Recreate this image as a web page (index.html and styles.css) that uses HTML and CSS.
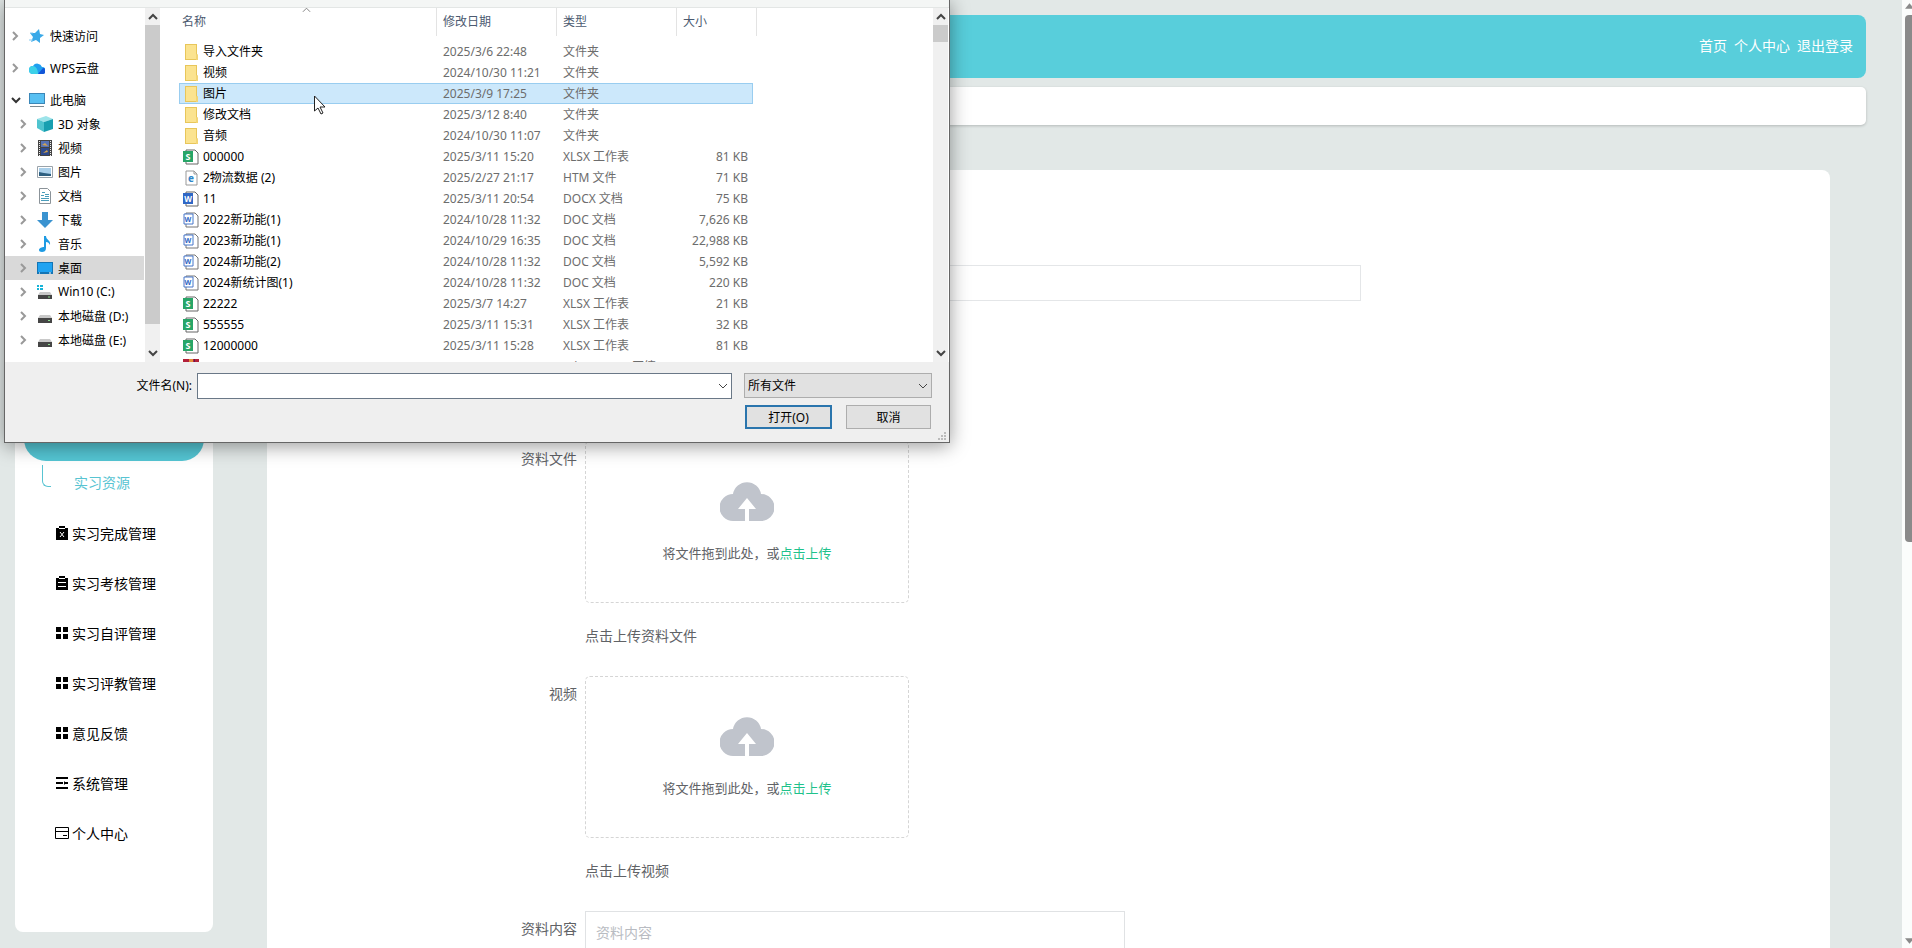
FILE: index.html
```html
<!DOCTYPE html>
<html lang="zh-CN">
<head>
  <meta charset="UTF-8">
  <meta name="viewport" content="width=device-width, initial-scale=1.0">
  <title>实习资源</title>
  <link rel="stylesheet" href="styles.css">
</head>
<body>

  <!-- 图标 -->
  <svg class="sprite" width="0" height="0">
    <symbol id="right" viewBox="0 0 8 10"><path d="M2 1l4 4-4 4" fill="none" stroke="currentColor"/></symbol>
    <symbol id="down" viewBox="0 0 10 8"><path d="M1 2l4 4 4-4" fill="none" stroke="currentColor"/></symbol>
    <symbol id="up" viewBox="0 0 10 8"><path d="M1 6l4-4 4 4" fill="none" stroke="currentColor"/></symbol>
    <symbol id="folder" viewBox="0 0 16 16"><path d="M2 0h12v10l1 1v5H2z" fill="#e8c65a"/><path d="M3 1h10v14H3z" fill="#fbe38f"/><path d="M13 10l2 1v5h-2z" fill="#f3d575"/></symbol>
    <symbol id="xlsx" viewBox="0 0 16 16"><path d="M3 1h9l3 3v11H3z" fill="#fff" stroke="#666"/><path d="M0 2h10v11H0z" fill="#27a567"/><text x="5" y="11" text-anchor="middle" font-size="9" font-weight="bold" fill="#fff">S</text></symbol>
    <symbol id="docx" viewBox="0 0 16 16"><path d="M3 1h9l3 3v11H3z" fill="#fff" stroke="#666"/><path d="M0 2h10v11H0z" fill="#2f67c5"/><text x="5" y="11" text-anchor="middle" font-size="8" font-weight="bold" fill="#fff">W</text></symbol>
    <symbol id="doc" viewBox="0 0 16 16"><path d="M3 1h9l3 3v11H3z" fill="#fff" stroke="#777"/><path d="M1 2h9v10H1z" fill="#fff" stroke="#4677ca"/><text x="5" y="10" text-anchor="middle" font-size="7" font-weight="bold" fill="#2f67c5">W</text></symbol>
    <symbol id="htm" viewBox="0 0 16 16"><path d="M3 1h8l3 3v11H3z" fill="#fff" stroke="#999"/><path d="M11 1v3h3" fill="none" stroke="#999"/><text x="8" y="12" text-anchor="middle" font-size="10" font-weight="bold" fill="#2d86c9">e</text></symbol>
    <symbol id="zip" viewBox="0 0 16 16"><path d="M0 0h16v16H0z" fill="#b3203a"/><path d="M6 0h4v16H6z" fill="#e5913a"/><path d="M11 0h1v16h-1z" fill="#5f1b55"/></symbol>
    <symbol id="star" viewBox="0 0 16 16"><path d="M10 1l1 5 4 1-4 3v5l-4-3-5 2 2-5-3-4h5z" fill="#3aa9e8"/><path d="M0 12h4M1 5h3" stroke="#8acbf0"/></symbol>
    <symbol id="wps" viewBox="0 0 16 16"><path d="M4 14a4 4 0 0 1 0-8 5 5 0 0 1 9 1 3 3 0 0 1 0 7z" fill="#1f9ff0"/><path d="M4 14a4 4 0 0 1 0-8c3 0 5 4 5 8z" fill="#3cd1e8"/><path d="M9 14l5-6a3 3 0 0 1-1 6z" fill="#1356d8"/></symbol>
    <symbol id="pc" viewBox="0 0 16 16"><path d="M0 1h16v11H0z" fill="#3b87b8"/><path d="M1 2h14v9H1z" fill="#58c0f2"/><path d="M1 14.500h14" stroke="#7d8a92"/></symbol>
    <symbol id="cube" viewBox="0 0 16 16"><path d="M0 3l9-3 7 3-9 3z" fill="#9de4ea"/><path d="M0 3l7 3v10l-7-4z" fill="#4fc4cf"/><path d="M7 6l9-3v10l-9 3z" fill="#189fb0"/></symbol>
    <symbol id="film" viewBox="0 0 16 16"><path d="M1 0h14v16H1z" fill="#444"/><path d="M4 1h8v6H4z" fill="#5772b5"/><path d="M4 8h8v7H4z" fill="#2e4a8c"/><path d="M5 5l3-2 3 3zM6 13l4-3 1 2z" fill="#d4a44e"/><path d="M2.500 1v15M13.500 1v15" stroke="#eee" stroke-dasharray="1 1"/></symbol>
    <symbol id="photo" viewBox="0 0 16 16"><path d="M0.500 2.500h15v11H0.500z" fill="#fff" stroke="#9aa3aa"/><path d="M2 4h12v8H2z" fill="#a9cfea"/><path d="M2 8l5 1 7 1v2H2z" fill="#2e5f80"/></symbol>
    <symbol id="paper" viewBox="0 0 16 16"><path d="M2.500 0.500h8l3 3v12h-11z" fill="#fff" stroke="#8b9399"/><path d="M4 7.500h3M4 10.500h8M4 12.500h8M8 6.500h4M8 8.500h4M5 4.500h3" stroke="#4b9dbb"/></symbol>
    <symbol id="download" viewBox="0 0 16 16"><path d="M5 0h6v8h5l-8 8-8-8h5z" fill="#3a93d0"/></symbol>
    <symbol id="music" viewBox="0 0 16 16"><path d="M7 0h2c0 4 5 4 4 9-1-2-2-3-4-3v6c0 3-2 4-4 4s-3-1-3-2c0-2 3-3 5-3z" fill="#1e9be3"/></symbol>
    <symbol id="desk" viewBox="0 0 16 16"><path d="M0 2h16v12H0z" fill="#1475b5"/><path d="M1 3h14v9H1z" fill="#20a3f2"/><path d="M2 13h1M12 13h2" stroke="#fff"/></symbol>
    <symbol id="disk" viewBox="0 0 16 16"><path d="M3 7h10l2 3H1z" fill="#c9c9c9"/><path d="M1 10h14v5H1z" fill="#454545"/><path d="M11 12.500h2" stroke="#8fe08f"/></symbol>
    <symbol id="windisk" viewBox="0 0 16 16"><path d="M3 8h10l2 3H1z" fill="#c9c9c9"/><path d="M1 11h14v4H1z" fill="#454545"/><path d="M11 13h2" stroke="#8fe08f"/><path d="M0 1h2v2H0zM3 1h3v2H3zM0 4h2v2H0zM3 4h3v2H3z" fill="#17b4d8"/></symbol>
    <symbol id="clip-x" viewBox="0 0 14 14"><path d="M1 2h3V0h6v2h3v12H1z"/><path d="M4 2.500h6M5 6l4 5M9 6l-4 5" stroke="#fff" fill="none"/></symbol>
    <symbol id="clip" viewBox="0 0 14 14"><path d="M1 2h3V0h6v2h3v12H1z"/><path d="M4 2.500h6M3 6.500h8M3 10.500h8" stroke="#fff" fill="none"/></symbol>
    <symbol id="menu" viewBox="0 0 14 14"><path d="M1 1h5v5H1zM8 1h5v5H8zM1 8h5v5H1zM8 8h5v5H8z"/></symbol>
    <symbol id="operation" viewBox="0 0 14 14"><path d="M1 2h12M1 7h7M10 7h3M1 12h12" stroke="currentColor" stroke-width="2"/><path d="M9 5l2 2-2 2z"/></symbol>
    <symbol id="card" viewBox="0 0 14 14"><path d="M0.500 1.500h13v11h-13zM0.500 5.500h13M8 9.500h4" fill="none" stroke="currentColor"/></symbol>
    <symbol id="cloud" viewBox="0 0 54 40"><path d="M13 40a13.500 13.500 0 0 1 0-27 14.200 14.200 0 0 1 28 0 13.500 13.500 0 0 1 0 27H29V28h7L27 17l-9 11h7v12z" fill="#c0c4cc"/></symbol>
  </svg>

  <div class="page">
    <aside class="sidebar">
      <ul class="menu">
        <li><a class="menu-active" href="#"><svg class="icon"><use href="#menu"/></svg>实习资源管理</a></li>
        <li class="submenu"><span class="branch"></span><a href="#">实习资源</a></li>
        <li><a href="#"><svg class="icon"><use href="#clip-x"/></svg>实习完成管理</a></li>
        <li><a href="#"><svg class="icon"><use href="#clip"/></svg>实习考核管理</a></li>
        <li><a href="#"><svg class="icon"><use href="#menu"/></svg>实习自评管理</a></li>
        <li><a href="#"><svg class="icon"><use href="#menu"/></svg>实习评教管理</a></li>
        <li><a href="#"><svg class="icon"><use href="#menu"/></svg>意见反馈</a></li>
        <li><a href="#"><svg class="icon"><use href="#operation"/></svg>系统管理</a></li>
        <li><a href="#"><svg class="icon"><use href="#card"/></svg>个人中心</a></li>
      </ul>
    </aside>

    <main class="main">
      <header class="header">
        <a href="#">首页</a>
        <a href="#">个人中心</a>
        <a href="#">退出登录</a>
      </header>
      <div class="tabs"></div>
      <form class="form">
        <div class="form-item form-title">
          <div class="field"><input class="text-input" type="text" aria-label="资料名称"></div>
        </div>
        <div class="form-item">
          <label for="file">资料文件</label>
          <div class="field">
            <button type="button" class="upload" id="file">
              <svg class="cloud"><use href="#cloud"/></svg>
              <span>将文件拖到此处，或<em>点击上传</em></span>
            </button>
            <p class="tip">点击上传资料文件</p>
          </div>
        </div>
        <div class="form-item">
          <label for="video">视频</label>
          <div class="field">
            <button type="button" class="upload" id="video">
              <svg class="cloud"><use href="#cloud"/></svg>
              <span>将文件拖到此处，或<em>点击上传</em></span>
            </button>
            <p class="tip">点击上传视频</p>
          </div>
        </div>
        <div class="form-item">
          <label for="content">资料内容</label>
          <div class="field"><textarea class="textarea" id="content" placeholder="资料内容"></textarea></div>
        </div>
      </form>
    </main>

    <div class="page-scroll">
      <svg class="page-arrow" viewBox="0 0 10 6"><path d="M0 6l5-6 5 6z"/></svg>
      <div class="page-thumb"></div>
      <svg class="page-arrow page-arrow-down" viewBox="0 0 10 6"><path d="M0 0l5 6 5-6z"/></svg>
    </div>
  </div>

  <!-- 文件选择窗口 -->
  <div class="dialog" role="dialog" aria-label="打开">
    <div class="dialog-top"></div>
    <div class="dialog-body">
      <ul class="tree">
        <li class="root"><svg class="arrow"><use href="#right"/></svg><svg class="file-icon"><use href="#star"/></svg>快速访问</li>
        <li class="root"><svg class="arrow"><use href="#right"/></svg><svg class="file-icon"><use href="#wps"/></svg>WPS云盘</li>
        <li class="root open"><svg class="arrow"><use href="#down"/></svg><svg class="file-icon"><use href="#pc"/></svg>此电脑</li>
        <li><svg class="arrow"><use href="#right"/></svg><svg class="file-icon"><use href="#cube"/></svg>3D 对象</li>
        <li><svg class="arrow"><use href="#right"/></svg><svg class="file-icon"><use href="#film"/></svg>视频</li>
        <li><svg class="arrow"><use href="#right"/></svg><svg class="file-icon"><use href="#photo"/></svg>图片</li>
        <li><svg class="arrow"><use href="#right"/></svg><svg class="file-icon"><use href="#paper"/></svg>文档</li>
        <li><svg class="arrow"><use href="#right"/></svg><svg class="file-icon"><use href="#download"/></svg>下载</li>
        <li><svg class="arrow"><use href="#right"/></svg><svg class="file-icon"><use href="#music"/></svg>音乐</li>
        <li class="current"><svg class="arrow"><use href="#right"/></svg><svg class="file-icon"><use href="#desk"/></svg>桌面</li>
        <li><svg class="arrow"><use href="#right"/></svg><svg class="file-icon"><use href="#windisk"/></svg>Win10 (C:)</li>
        <li><svg class="arrow"><use href="#right"/></svg><svg class="file-icon"><use href="#disk"/></svg>本地磁盘 (D:)</li>
        <li><svg class="arrow"><use href="#right"/></svg><svg class="file-icon"><use href="#disk"/></svg>本地磁盘 (E:)</li>
      </ul>
      <div class="scroll">
        <svg><use href="#up"/></svg>
        <div class="thumb thumb-tree"></div>
        <svg class="scroll-down"><use href="#down"/></svg>
      </div>

      <div class="list">
        <svg class="sort"><use href="#up"/></svg>
        <table class="files">
          <colgroup><col class="col-name"><col class="col-date"><col class="col-type"><col class="col-size"><col class="col-end"></colgroup>
          <thead>
            <tr><th>名称</th><th>修改日期</th><th>类型</th><th>大小</th><th></th></tr>
          </thead>
          <tbody>
            <tr><td><svg class="file-icon"><use href="#folder"/></svg>导入文件夹</td><td>2025/3/6 22:48</td><td>文件夹</td><td></td></tr>
            <tr><td><svg class="file-icon"><use href="#folder"/></svg>视频</td><td>2024/10/30 11:21</td><td>文件夹</td><td></td></tr>
            <tr class="selected"><td><svg class="file-icon"><use href="#folder"/></svg>图片</td><td>2025/3/9 17:25</td><td>文件夹</td><td></td></tr>
            <tr><td><svg class="file-icon"><use href="#folder"/></svg>修改文档</td><td>2025/3/12 8:40</td><td>文件夹</td><td></td></tr>
            <tr><td><svg class="file-icon"><use href="#folder"/></svg>音频</td><td>2024/10/30 11:07</td><td>文件夹</td><td></td></tr>
            <tr><td><svg class="file-icon"><use href="#xlsx"/></svg>000000</td><td>2025/3/11 15:20</td><td>XLSX 工作表</td><td>81 KB</td></tr>
            <tr><td><svg class="file-icon"><use href="#htm"/></svg>2物流数据 (2)</td><td>2025/2/27 21:17</td><td>HTM 文件</td><td>71 KB</td></tr>
            <tr><td><svg class="file-icon"><use href="#docx"/></svg>11</td><td>2025/3/11 20:54</td><td>DOCX 文档</td><td>75 KB</td></tr>
            <tr><td><svg class="file-icon"><use href="#doc"/></svg>2022新功能(1)</td><td>2024/10/28 11:32</td><td>DOC 文档</td><td>7,626 KB</td></tr>
            <tr><td><svg class="file-icon"><use href="#doc"/></svg>2023新功能(1)</td><td>2024/10/29 16:35</td><td>DOC 文档</td><td>22,988 KB</td></tr>
            <tr><td><svg class="file-icon"><use href="#doc"/></svg>2024新功能(2)</td><td>2024/10/28 11:32</td><td>DOC 文档</td><td>5,592 KB</td></tr>
            <tr><td><svg class="file-icon"><use href="#doc"/></svg>2024新统计图(1)</td><td>2024/10/28 11:32</td><td>DOC 文档</td><td>220 KB</td></tr>
            <tr><td><svg class="file-icon"><use href="#xlsx"/></svg>22222</td><td>2025/3/7 14:27</td><td>XLSX 工作表</td><td>21 KB</td></tr>
            <tr><td><svg class="file-icon"><use href="#xlsx"/></svg>555555</td><td>2025/3/11 15:31</td><td>XLSX 工作表</td><td>32 KB</td></tr>
            <tr><td><svg class="file-icon"><use href="#xlsx"/></svg>12000000</td><td>2025/3/11 15:28</td><td>XLSX 工作表</td><td>81 KB</td></tr>
            <tr><td><svg class="file-icon"><use href="#zip"/></svg></td><td></td><td>WinRAR ZIP 压缩</td><td></td></tr>
          </tbody>
        </table>
      </div>
      <div class="scroll scroll-list">
        <svg><use href="#up"/></svg>
        <div class="thumb thumb-list"></div>
        <svg class="scroll-down"><use href="#down"/></svg>
      </div>
    </div>

    <div class="dialog-foot">
      <label for="filename">文件名(N):</label>
      <div class="combo">
        <input type="text" id="filename">
        <svg class="combo-arrow"><use href="#down"/></svg>
      </div>
      <div class="combo">
        <select aria-label="文件类型"><option>所有文件</option></select>
        <svg class="combo-arrow"><use href="#down"/></svg>
      </div>
      <div class="buttons">
        <button type="button" class="btn btn-default">打开(O)</button>
        <button type="button" class="btn">取消</button>
      </div>
    </div>
    <svg class="grip" viewBox="0 0 8 8"><path d="M6 0h2v2H6zM3 3h2v2H3zM6 3h2v2H6zM0 6h2v2H0zM3 6h2v2H3zM6 6h2v2H6z" fill="#bbb"/></svg>
  </div>

  <svg class="cursor" viewBox="0 0 12 20"><path d="M0.500 1v15l3.500-3 3 6 2-1-3-6h5z" fill="#fff" stroke="#222"/></svg>

</body>
</html>
```
FILE: styles.css
```css
* {
  box-sizing: border-box;
}

html, body {
  margin: 0;
  height: 100%;
  overflow: hidden;
  font-family: "Noto Sans", "Noto Sans CJK SC", sans-serif;
  background: #e2e8e7;
}

ul, p {
  margin: 0;
  padding: 0;
  list-style: none;
}

a {
  color: inherit;
  text-decoration: none;
}

input, select, textarea, button {
  font: inherit;
}

.sprite {
  display: none;
}

.page {
  display: flex;
  height: 100%;
  font-size: 14px;
  font-family: "Noto Sans CJK SC", sans-serif;
}

/* 左侧菜单 */
.sidebar {
  width: 198px;
  margin: 15px 18px 16px 15px;
  padding-top: 398px;
  background: #fff;
  border-radius: 8px;
}

.menu a {
  display: flex;
  align-items: center;
  gap: 3px;
  height: 50px;
  padding-left: 40px;
  color: #000;
}

.menu .menu-active {
  height: 48px;
  margin: 0 9px;
  padding: 0 0 4px 31px;
  color: #fff;
  background: #54c5d3;
  border-radius: 22px;
}

.icon {
  width: 14px;
  height: 14px;
  fill: currentColor;
}

.submenu {
  display: flex;
  height: 47px;
  padding: 4px 0 4px 27px;
}

.branch {
  width: 9px;
  height: 22px;
  border: solid #58c4d2;
  border-width: 0 0 1px 1px;
  border-bottom-left-radius: 6px;
}

.menu .submenu a {
  height: 34px;
  padding-left: 23px;
  color: #58c4d2;
}

/* 主体 */
.main {
  flex: 1;
  margin-right: 36px;
}

.header {
  display: flex;
  align-items: center;
  justify-content: flex-end;
  gap: 7px;
  height: 63px;
  margin-top: 15px;
  padding: 0 13px 3px 0;
  color: #fff;
  background: #58cedb;
  border-radius: 8px;
}

.tabs {
  height: 38px;
  margin-top: 9px;
  background: #fff;
  border-radius: 5px;
  box-shadow: 0 1px 3px rgba(0, 0, 0, 0.2);
}

.form {
  margin: 45px 36px 0;
  padding: 95px 30px 30px 0;
  background: #fff;
  border-radius: 8px;
  color: #606266;
}

.form-item {
  display: flex;
  margin-bottom: 26px;
}

.form-item label {
  width: 310px;
  line-height: 34px;
  text-align: right;
}

.field {
  flex: 1;
  margin-left: 8px;
}

.form-title {
  padding-left: 310px;
  margin-bottom: 140px;
}

.text-input {
  display: block;
  width: 100%;
  max-width: 776px;
  height: 36px;
  border: 1px solid #e4e6e8;
}

.upload {
  display: flex;
  flex-direction: column;
  align-items: center;
  width: 324px;
  height: 162px;
  padding: 39px 0 0;
  gap: 22px;
  font-size: 13px;
  color: #606266;
  background: #fff;
  border: 1px dashed #d5d5d5;
  border-radius: 5px;
}

.upload em {
  font-style: normal;
  color: #1fc28b;
}

.cloud {
  width: 54px;
  height: 40px;
}

.tip {
  padding-top: 17px;
  line-height: 30px;
}

.textarea {
  display: block;
  width: 100%;
  max-width: 540px;
  height: 120px;
  padding: 10px;
  border: 1px solid #e0e2e4;
  resize: none;
}

.textarea::placeholder {
  color: #b9bcc2;
}

/* 页面滚动条 */
.page-scroll {
  display: flex;
  flex-direction: column;
  width: 10px;
  padding: 3px 0 4px 3px;
  overflow: hidden;
  background: #fbfdfc;
}

.page-arrow {
  flex: none;
  width: 9px;
  height: 6px;
  fill: #8a8a8a;
}

.page-arrow-down {
  margin-top: auto;
}

.page-thumb {
  width: 10px;
  height: 56%;
  margin-top: 6px;
  background: #8a8a8a;
  border-radius: 4px;
}

/* 文件窗口 */
.dialog {
  position: absolute;
  top: 0;
  left: 4px;
  width: 946px;
  font-size: 12px;
  color: #000;
  background: #efefef;
  border: 1px solid #666;
  border-top: 0;
  box-shadow: 0 3px 18px rgba(0, 0, 0, 0.4);
}

.dialog-top {
  height: 8px;
  background: #f4f6f5;
  border-bottom: 1px solid #e3e6e5;
}

.dialog-body {
  display: flex;
  height: 354px;
  background: #fff;
}

.tree {
  width: 140px;
  padding-top: 16px;
}

.tree li {
  display: flex;
  align-items: center;
  height: 24px;
  margin-right: 1px;
  padding: 0 0 1px 14px;
  white-space: nowrap;
}

.tree .root {
  padding-left: 6px;
  margin-bottom: 8px;
}

.tree .open {
  margin-bottom: 0;
}

.tree .current {
  background: #d9d9d9;
}

.arrow {
  width: 8px;
  height: 10px;
  margin-right: 10px;
  color: #999;
  stroke-width: 2px;
}

.open .arrow {
  width: 10px;
  margin-right: 8px;
  color: #333;
}

.file-icon {
  flex: none;
  width: 16px;
  height: 16px;
  margin-right: 5px;
}

.scroll {
  display: flex;
  flex-direction: column;
  align-items: center;
  width: 15px;
  background: #f0f0f0;
}

.scroll-list {
  margin-right: 1px;
}

.scroll svg {
  width: 10px;
  height: 8px;
  margin-top: 5px;
  color: #444;
  stroke-width: 2px;
}

.scroll .scroll-down {
  margin: auto 0 5px;
}

.thumb {
  width: 15px;
  margin-top: 4px;
  background: #cbcbcb;
}

.thumb-tree {
  height: 299px;
}

.thumb-list {
  height: 17px;
}

.list {
  flex: 1;
  position: relative;
  padding-left: 15px;
  margin-left: 4px;
  overflow: hidden;
}

.sort {
  position: absolute;
  top: -2px;
  left: 138px;
  width: 9px;
  height: 8px;
  color: #777;
}

.files {
  width: 578px;
  table-layout: fixed;
  border-collapse: separate;
  border-spacing: 0;
}

.col-name { width: 258px; }
.col-date { width: 120px; }
.col-type { width: 120px; }
.col-size { width: 76px; }
.col-end { width: 4px; }

.files th {
  height: 28px;
  padding: 0 0 2px 6px;
  font-weight: 400;
  text-align: left;
  color: #4c5a70;
  border-right: 1px solid #e3e3e3;
}

.files th:first-child {
  padding-left: 3px;
}

.files th:nth-child(4) {
  border-right: 0;
}

.files th:last-child {
  padding: 0;
}

/* 表头与列表的间隔 */
.files tbody::before {
  content: "";
  display: block;
  height: 5px;
}

.files td {
  height: 21px;
  padding: 0 0 0 6px;
  line-height: 18px;
  white-space: nowrap;
  color: #6d6d6d;
  border: 1px solid transparent;
  border-width: 1px 0;
}

.files td:first-child {
  padding-left: 4px;
  color: #000;
}

.files td:nth-child(4) {
  padding: 0 5px 0 0;
  text-align: right;
}

.files td .file-icon {
  margin-right: 4px;
  vertical-align: middle;
}

.files .selected td {
  background: #cce8fb;
  border-color: #99cdf0;
}

.files .selected td:first-child {
  border-left-width: 1px;
  padding-left: 3px;
}

.files .selected td:last-child {
  border-right-width: 1px;
}

.dialog-foot {
  display: grid;
  grid-template-columns: 187px 528px 188px;
  align-content: start;
  column-gap: 12px;
  row-gap: 6px;
  height: 80px;
  padding-top: 11px;
}

.dialog-foot label {
  line-height: 25px;
  text-align: right;
}

.dialog-foot label + .combo {
  margin-left: -7px;
}

.combo {
  position: relative;
  height: 26px;
}

.combo input {
  display: block;
  width: 100%;
  height: 26px;
  padding: 0 24px 0 4px;
  border: 1px solid #6a7887;
  background: #fff;
}

.combo select {
  display: block;
  width: 100%;
  height: 25px;
  padding: 0 3px;
  appearance: none;
  color: #000;
  border: 1px solid #adadad;
  border-radius: 0;
  background: #e1e1e1;
}

.combo-arrow {
  position: absolute;
  top: 9px;
  right: 4px;
  width: 10px;
  height: 8px;
  color: #444;
}

.buttons {
  grid-column: 3;
  display: flex;
  gap: 14px;
  padding: 0 1px;
}

.btn {
  flex: 1;
  height: 24px;
  padding: 0;
  color: #000;
  background: #e1e1e1;
  border: 1px solid #adadad;
}

.btn-default {
  border: 2px solid #2a75ad;
}

.grip {
  position: absolute;
  right: 3px;
  bottom: 2px;
  width: 8px;
  height: 8px;
}

.cursor {
  position: absolute;
  top: 95px;
  left: 314px;
  width: 12px;
  height: 20px;
}
```
